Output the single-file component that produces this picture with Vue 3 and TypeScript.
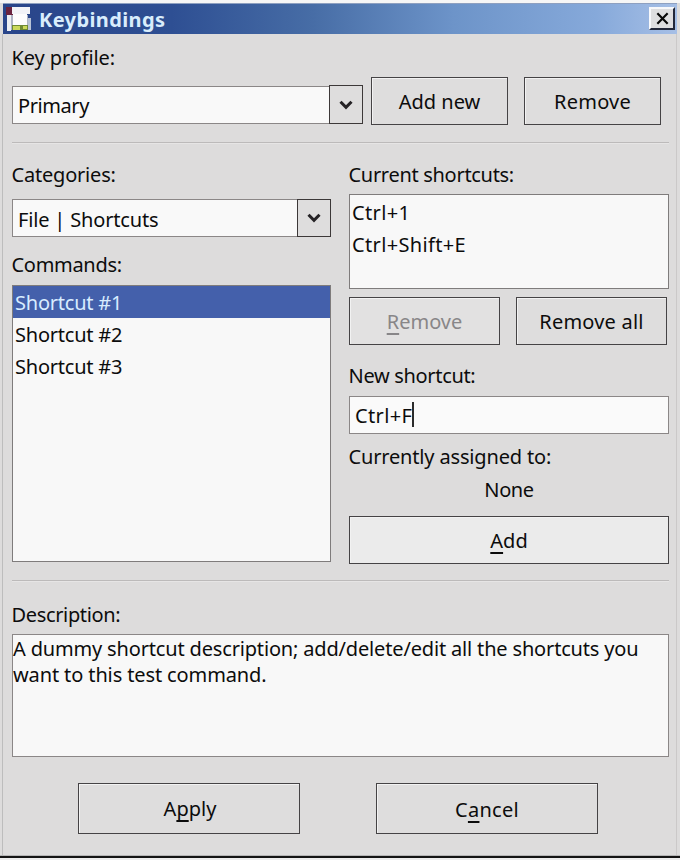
<script setup lang="ts">
import { ref } from 'vue'

interface Entry {
  id: number
  label: string
}

const commands: Entry[] = [
  { id: 1, label: 'Shortcut #1' },
  { id: 2, label: 'Shortcut #2' },
  { id: 3, label: 'Shortcut #3' },
]
const shortcuts: string[] = ['Ctrl+1', 'Ctrl+Shift+E']
const selected = ref<number>(1)
const assigned = ref<string>('None')
</script>

<template>
  <main class="window">
    <header class="titlebar">
      <svg class="app-icon" viewBox="0 0 26 26">
        <rect x="0" y="1" width="7" height="8" fill="#6b2440" />
        <rect x="1" y="9" width="21" height="15" fill="#aeb4c4" />
        <path d="M6 1h18v7h-18z" fill="#f2f3f7" />
        <path d="M1 9h4v16h-4z" fill="#eceef2" />
        <path d="M7 8h14v11h-14z" fill="#fdfdfd" />
        <path d="M22 12h3v12h-3z" fill="#b9c3d6" />
        <path d="M6 19h16v5h-16z" fill="#6f8a35" />
        <path d="M7 20h7v4h-7zM17 20h4v3h-4z" fill="#cbd95a" />
      </svg>
      <h1>Keybindings</h1>
      <button class="close" aria-label="Close">
        <svg viewBox="0 0 16 16"><path d="M2.5 2.5 13.5 13.5M13.5 2.5 2.5 13.5" /></svg>
      </button>
    </header>

    <section class="body">
      <label class="label profile-label">Key profile:</label>
      <div class="profile-row">
        <div class="combo profile-combo">
          <span class="value primary">Primary</span>
          <button class="arrow" aria-label="Open"><svg viewBox="0 0 14 10"><path d="M1.5 1.8 7 7.4 12.5 1.8" /></svg></button>
        </div>
        <button class="btn add-new"><span>Add new</span></button>
        <button class="btn remove-profile"><span>Remove</span></button>
      </div>
      <div class="rule"></div>

      <div class="columns">
        <div class="left">
          <label class="label categories">Categories:</label>
          <div class="combo category-combo">
            <span class="value file">File | Shortcuts</span>
            <button class="arrow" aria-label="Open"><svg viewBox="0 0 14 10"><path d="M1.5 1.8 7 7.4 12.5 1.8" /></svg></button>
          </div>
          <label class="label commands-label">Commands:</label>
          <ul class="list commands">
            <li v-for="c in commands" :key="c.id" :class="{ active: c.id === selected }" @click="selected = c.id">{{ c.label }}</li>
          </ul>
        </div>

        <div class="right">
          <label class="label current">Current shortcuts:</label>
          <ul class="list shortcuts">
            <li v-for="s in shortcuts" :key="s">{{ s }}</li>
          </ul>
          <div class="pair">
            <button class="btn disabled"><span><u>R</u>emove</span></button>
            <button class="btn remove-all"><span>Remove all</span></button>
          </div>
          <label class="label new-label">New shortcut:</label>
          <div class="field"><span>Ctrl+F</span><i class="caret"></i></div>
          <label class="label assigned-label">Currently assigned to:</label>
          <div class="assigned">{{ assigned }}</div>
          <button class="btn add"><span><u>A</u>dd</span></button>
        </div>
      </div>

      <div class="rule"></div>
      <label class="label description-label">Description:</label>
      <div class="description">
        <p class="first">A dummy shortcut description; add/delete/edit all the shortcuts you</p>
        <p class="second">want to this test command.</p>
      </div>
      <div class="actions">
        <button class="btn apply"><span>A<u>p</u>ply</span></button>
        <button class="btn cancel"><span>C<u>a</u>ncel</span></button>
      </div>
    </section>
  </main>
</template>

<style>
body {
  margin: 0;
  background: #f4f4f4;
}
</style>

<style scoped>
* {
  box-sizing: border-box;
}
.window {
  width: 680px;
  height: 860px;
  padding: 3px 2px 0 2px;
  background: linear-gradient(#f6f6f6 0 3px, #dddcdc 3px 855px, #b5b5b5 855px 856px, #141414 856px 858px, #ededed 858px);
  font-family: "Noto Sans", sans-serif;
  font-size: 20px;
  line-height: 26px;
  color: #0c0c0c;
  overflow: hidden;
}
.titlebar {
  display: flex;
  align-items: center;
  height: 31px;
  margin: 0 1px;
  padding: 0 1px 0 3px;
  border-top: 1px solid #8ea0c0;
  background: linear-gradient(90deg, #29458a 0%, #2e4f93 25%, #476da6 46%, #6d94c9 67%, #86a9da 88%, #a6bfe6 100%);
}
.app-icon {
  width: 26px;
  height: 26px;
}
h1 {
  margin: 2px 0 0 7px;
  font-size: 20px;
  line-height: 26px;
  font-weight: 700;
  letter-spacing: 0.38px;
  color: #d9edfc;
  white-space: nowrap;
}
button {
  appearance: none;
  margin: 0;
  padding: 0;
  font: inherit;
  letter-spacing: inherit;
  color: inherit;
  border-radius: 0;
}
.close {
  display: flex;
  align-items: center;
  justify-content: center;
  width: 26px;
  height: 23px;
  margin: 0 1px 1px auto;
  background: #dedee0;
  border: 2px solid;
  border-color: #f7f8fb #23283a #23283a #f7f8fb;
}
.close svg {
  width: 15px;
  height: 15px;
  fill: none;
  stroke: #080808;
  stroke-width: 2.3;
}
.body {
  display: flex;
  flex-direction: column;
  height: 821px;
  margin: 0 1px 0 0;
  padding: 10px 8px 0 9px;
  border-left: 1px solid #bdbdbd;
  border-right: 1px solid #cbc9c9;
}
.label {
  display: block;
  height: 26px;
  padding-top: 1px;
  margin-left: -0.5px;
  white-space: nowrap;
}
.profile-label {
  letter-spacing: -0.1px;
}
.profile-row {
  display: flex;
  align-items: flex-start;
  height: 65px;
  padding-top: 7px;
}
.combo {
  display: flex;
  justify-content: space-between;
  height: 38px;
  border: 1px solid #8b8787;
  background: #f9f9f9;
  white-space: nowrap;
}
.profile-combo {
  width: 351px;
  margin-top: 9px;
}
.value {
  padding: 6px 0 0 5px;
}
.primary {
  letter-spacing: -0.42px;
}
.file {
  padding-top: 7px;
  letter-spacing: -0.17px;
}
.arrow {
  display: flex;
  align-items: center;
  justify-content: center;
  width: 34px;
  height: 38px;
  margin: -1px -1px 0 0;
  border: 1px solid #3c3838;
  background: #dedddd;
}
.profile-combo .arrow {
  height: 39px;
  margin-top: -2px;
}
.arrow svg {
  width: 14px;
  height: 10px;
  fill: none;
  stroke: #252225;
  stroke-width: 3;
}
.btn {
  display: flex;
  align-items: center;
  justify-content: center;
  height: 48px;
  border: 1px solid #454345;
  box-shadow: inset 1px 1px 0 #f2f2f2;
  background: #dedddd;
  white-space: nowrap;
}
.btn span {
  padding-top: 1px;
}
u {
  text-decoration-thickness: 1.5px;
  text-underline-offset: 4px;
  text-decoration-skip-ink: none;
}
.add-new {
  width: 137px;
  margin-left: 8px;
}
.remove-profile {
  width: 137px;
  margin-left: 16px;
  letter-spacing: 0.2px;
}
.rule {
  flex: none;
  height: 2px;
  width: 657px;
  border-top: 1px solid #bcbaba;
  border-bottom: 1px solid #e6e5e5;
  margin-top: 7px;
}
.columns {
  display: flex;
  flex: none;
  justify-content: space-between;
  width: 657px;
  height: 429px;
  padding-top: 17px;
}
.left {
  width: 319px;
}
.right {
  width: 320px;
}
.categories {
  letter-spacing: -0.2px;
}
.category-combo {
  margin-top: 12px;
}
.commands-label {
  margin-top: 14px;
  letter-spacing: -0.3px;
}
.list {
  margin: 0;
  padding: 0;
  list-style: none;
  border: 1px solid #7f7c7c;
  background: #f8f8f8;
}
.list li {
  height: 32px;
  padding: 4px 0 0 2px;
  white-space: nowrap;
}
.commands {
  height: 277px;
  margin-top: 8px;
  letter-spacing: -0.22px;
}
.list li.active {
  background: #4460ab;
  color: #d8ecff;
}
.current {
  letter-spacing: -0.3px;
}
.shortcuts {
  height: 95px;
  margin-top: 7px;
  padding-top: 2px;
  letter-spacing: 0.35px;
}
.shortcuts li {
  padding-top: 3px;
}
.pair {
  display: flex;
  gap: 16px;
  margin-top: 8px;
}
.pair .btn {
  width: 151px;
}
.disabled {
  color: #888688;
  background: #e2e1e1;
}
.remove-all {
  letter-spacing: 0.2px;
}
.new-label {
  margin-top: 17px;
  letter-spacing: -0.32px;
}
.field {
  display: flex;
  height: 38px;
  margin-top: 8px;
  padding: 6px 0 0 5px;
  border: 1px solid #8b8787;
  background: #fafafa;
  letter-spacing: 0.35px;
}
.caret {
  width: 2px;
  height: 25px;
  margin-top: -1px;
  background: #2b2b2b;
}
.assigned-label {
  margin-top: 9px;
  letter-spacing: -0.16px;
}
.assigned {
  margin-top: 8px;
  text-align: center;
  letter-spacing: -0.4px;
}
.add {
  width: 320px;
  margin-top: 13px;
  background: #ebebeb;
}
.description-label {
  margin-top: 19px;
  letter-spacing: -0.35px;
}
.description {
  width: 657px;
  height: 123px;
  margin-top: 7px;
  padding: 1px 0 0 0;
  border: 1px solid #8b8787;
  background: #f8f8f8;
}
.description p {
  margin: 0;
  white-space: nowrap;
}
.first {
  letter-spacing: -0.165px;
}
.second {
  letter-spacing: -0.12px;
}
.actions {
  display: flex;
  gap: 76px;
  margin: 26px 0 0 66px;
}
.actions .btn {
  width: 222px;
  height: 51px;
}
.apply {
  padding-left: 2px;
}
.cancel {
  letter-spacing: 0.3px;
}
.cancel span {
  padding-top: 2px;
}
</style>
